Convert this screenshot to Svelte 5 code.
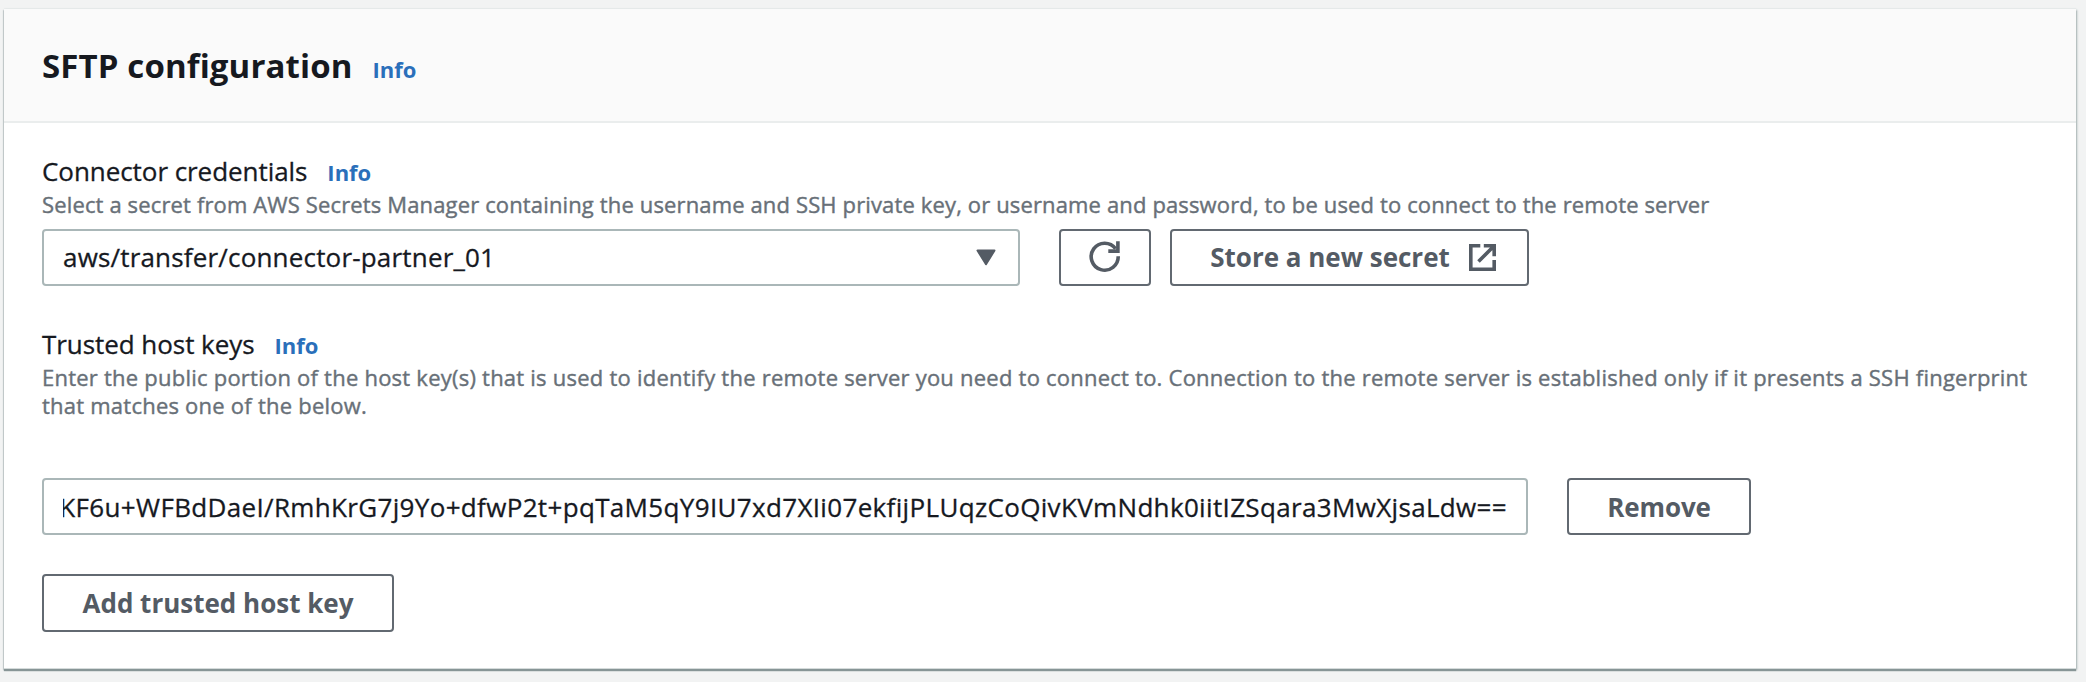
<script>
	let secret = 'aws/transfer/connector-partner_01';

	let hostKeys = [
		{ id: 1, value: 'KF6u+WFBdDaeI/RmhKrG7j9Yo+dfwP2t+pqTaM5qY9IU7xd7XIi07ekfijPLUqzCoQivKVmNdhk0iitIZSqara3MwXjsaLdw==' }
	];

	let uid = hostKeys.length + 1;

	function add() {
		hostKeys = [...hostKeys, { id: uid++, value: '' }];
	}

	function remove(key) {
		hostKeys = hostKeys.filter(k => k !== key);
	}
</script>

<section class="card">
	<header>
		<h2>SFTP configuration</h2>
		<a class="info" href="#info">Info</a>
	</header>

	<div class="body">
		<div class="field">
			<div class="label">
				<span>Connector credentials</span>
				<a class="info" href="#info">Info</a>
			</div>
			<p class="hint">Select a secret from AWS Secrets Manager containing the username and SSH private key, or username and password, to be used to connect to the remote server</p>
			<div class="row">
				<div class="box select">
					<span>{secret}</span>
					<svg width="20" height="17" viewBox="0 0 20 17">
						<path d="M1.5 1.5h17L10 15.2z" fill="#545b64" stroke="#545b64" stroke-width="2" stroke-linejoin="round" />
					</svg>
				</div>
				<button class="refresh" aria-label="Refresh">
					<svg width="32" height="32" viewBox="0 0 32 32">
						<path d="M29.2 15.2A13.5 13.5 0 1 1 26.6 7.7" />
						<path d="M19.3 10.1h9.6V.3" />
					</svg>
				</button>
				<button class="store">
					Store a new secret
					<svg width="27" height="27" viewBox="0 0 27 27">
						<path d="M11.3 1.8H1.8v23.4h23.4V16" />
						<path d="M14.8 1.8h10.4v10.4M25 2L9.5 17.5" />
					</svg>
				</button>
			</div>
		</div>

		<div class="field keys">
			<div class="label">
				<span>Trusted host keys</span>
				<a class="info" href="#info">Info</a>
			</div>
			<p class="hint wide">Enter the public portion of the host key(s) that is used to identify the remote server you need to connect to. Connection to the remote server is established only if it presents a SSH fingerprint<br>that matches one of the below.</p>
			{#each hostKeys as key (key.id)}
				<div class="row key-row">
					<div class="box key"><div class="clip"><span>{key.value}</span></div></div>
					<button class="remove" on:click={() => remove(key)}>Remove</button>
				</div>
			{/each}
			<button class="add" on:click={add}>Add trusted host key</button>
		</div>
	</div>
</section>

<style>
	:global(body) {
		background: #f2f3f3;
		font-family: 'Open Sans', 'Noto Sans', sans-serif;
		color: #16191f;
	}

	:global(#app) {
		display: flow-root;
		min-height: 100vh;
	}

	* {
		box-sizing: border-box;
	}

	.card {
		width: 2072px;
		height: 660px;
		margin: 9px 0 0 4px;
		background: #fff;
		border-bottom: 1px solid #d5dbdb;
		box-shadow: 0 2px 1px #879596, 1px 1px 2px #aab7b8, -1px 1px 1px #d0d5d7, 0 -1px 1px #eaeded;
	}

	header {
		display: flex;
		align-items: baseline;
		height: 114px;
		padding: 34px 38px 0;
		background: #fafafa;
		border-bottom: 2px solid #eaeded;
	}

	h2 {
		margin: 0;
		font-size: 33px;
		line-height: 46px;
		font-weight: 700;
		letter-spacing: 0.12px;
	}

	.info {
		margin-left: 20px;
		font-size: 22px;
		font-weight: 700;
		letter-spacing: 0;
		color: #2a6fba;
		text-decoration: none;
	}

	.body {
		padding: 29px 38px 0;
	}

	.label {
		display: flex;
		align-items: baseline;
		height: 38px;
		font-size: 26px;
		line-height: 38px;
		letter-spacing: -0.06px;
	}

	.label span,
	.box span {
		-webkit-text-stroke: 0.3px currentColor;
	}

	.hint {
		margin: 0;
		font-size: 22px;
		line-height: 28.7px;
		letter-spacing: 0.14px;
		color: #687078;
		white-space: nowrap;
		-webkit-text-stroke: 0.4px currentColor;
	}

	.hint.wide {
		letter-spacing: 0.23px;
	}

	.row {
		display: flex;
		margin-top: 10px;
	}

	.box {
		display: flex;
		align-items: center;
		height: 57px;
		padding: 0 19px;
		border: 2px solid #aab7b8;
		border-radius: 4px;
		font-size: 26px;
		white-space: nowrap;
	}

	.select {
		justify-content: space-between;
		width: 978px;
		padding-right: 22px;
		letter-spacing: 0.18px;
	}

	.key {
		width: 1486px;
		letter-spacing: 0.34px;
	}

	.clip {
		display: flex;
		flex: 1;
		justify-content: flex-end;
		min-width: 0;
		overflow: hidden;
	}

	button {
		display: flex;
		align-items: center;
		justify-content: center;
		height: 57px;
		padding: 0;
		background: #fff;
		border: 2px solid #626971;
		border-radius: 4px;
		font-family: inherit;
		font-size: 26px;
		font-weight: 700;
		color: #545b64;
		white-space: nowrap;
	}

	button svg {
		fill: none;
		stroke: #545b64;
		stroke-width: 3.6;
	}

	.refresh {
		width: 92px;
		margin-left: 39px;
	}

	.store {
		gap: 19px;
		width: 359px;
		margin-left: 19px;
		padding-left: 7px;
	}

	.keys {
		margin-top: 39px;
	}

	.key-row {
		margin-top: 58px;
	}

	.remove {
		width: 184px;
		margin-left: 39px;
		letter-spacing: -0.1px;
	}

	.add {
		width: 352px;
		height: 58px;
		margin-top: 39px;
	}
</style>
